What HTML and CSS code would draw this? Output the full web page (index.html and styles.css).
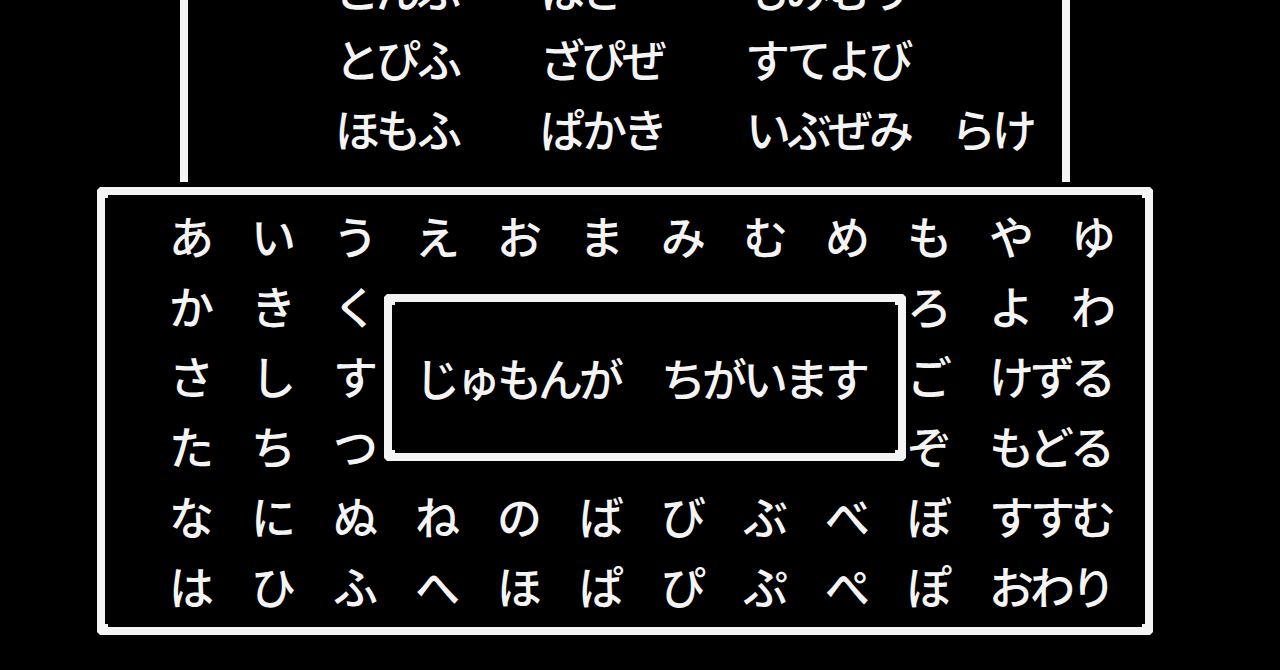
FILE: index.html
```html
<!DOCTYPE html>
<html lang="ja">
<head>
  <meta charset="utf-8" />
  <title>ふっかつのじゅもん</title>
  <link rel="stylesheet" href="styles.css">
</head>
<body>
  <!-- 入力済みのじゅもん -->
  <div class="window top-window">
    <div class="lines">
      <div class="line">こんぷ　　はさ　　　もみむり</div>
      <div class="line">とぴふ　　ざぴぜ　　すてよび</div>
      <div class="line">ほもふ　　ぱかき　　いぶぜみ　らけ</div>
    </div>
  </div>

  <!-- もじ えらび -->
  <div class="window main-window">
    <div class="grid">
      <div class="line">あ　い　う　え　お　ま　み　む　め　も　や　ゆ</div>
      <div class="line split"><span>か　き　く</span><span>ろ　よ　わ</span></div>
      <div class="line split"><span>さ　し　す</span><span>ご　けずる</span></div>
      <div class="line split"><span>た　ち　つ</span><span>ぞ　もどる</span></div>
      <div class="line">な　に　ぬ　ね　の　ば　び　ぶ　べ　ぼ　すすむ</div>
      <div class="line">は　ひ　ふ　へ　ほ　ぱ　ぴ　ぷ　ぺ　ぽ　おわり</div>
    </div>

    <div class="window popup">
      <div class="line">じゅもんが　ちがいます</div>
    </div>
  </div>
</body>
</html>
```

FILE: styles.css
```css
body { margin: 0; background: #000; color: #f4f4f4; font-family: "Noto Sans CJK JP", "Noto Sans", sans-serif; height: 670px; overflow: hidden; }

/* ドット風のまど: 外側の角を欠き、内側の角に小さな四角 */
.window {
  box-sizing: border-box;
  background-color: #000;
  border: 8px solid #f4f4f4;
  background-image:
    linear-gradient(#f4f4f4, #f4f4f4), linear-gradient(#f4f4f4, #f4f4f4),
    linear-gradient(#f4f4f4, #f4f4f4), linear-gradient(#f4f4f4, #f4f4f4);
  background-size: 3px 3px;
  background-repeat: no-repeat;
  background-position: top left, top right, bottom left, bottom right;
  background-origin: padding-box;
  clip-path: polygon(3px 0, calc(100% - 3px) 0, 100% 3px, 100% calc(100% - 3px), calc(100% - 3px) 100%, 3px 100%, 0 calc(100% - 3px), 0 3px);
}

/* 1マス = 41px */
.line { font-size: 45px; letter-spacing: -4px; line-height: 70px; white-space: pre; font-weight: 500; }
.line.split { display: flex; gap: 533px; }

.top-window { margin-left: 180px; width: 890px; height: 182px; border-top: none; border-bottom: none; background-image: none; clip-path: none; overflow: hidden; padding-left: 147px; }
.top-window .lines { margin-top: -46px; }

.main-window { position: relative; margin: 5px 0 0 97px; width: 1056px; height: 448px; padding: 6px 0 0 64px; }

.popup { position: absolute; left: 279px; top: 99px; width: 522px; height: 167px; display: flex; align-items: center; padding-left: 23px; }
```
